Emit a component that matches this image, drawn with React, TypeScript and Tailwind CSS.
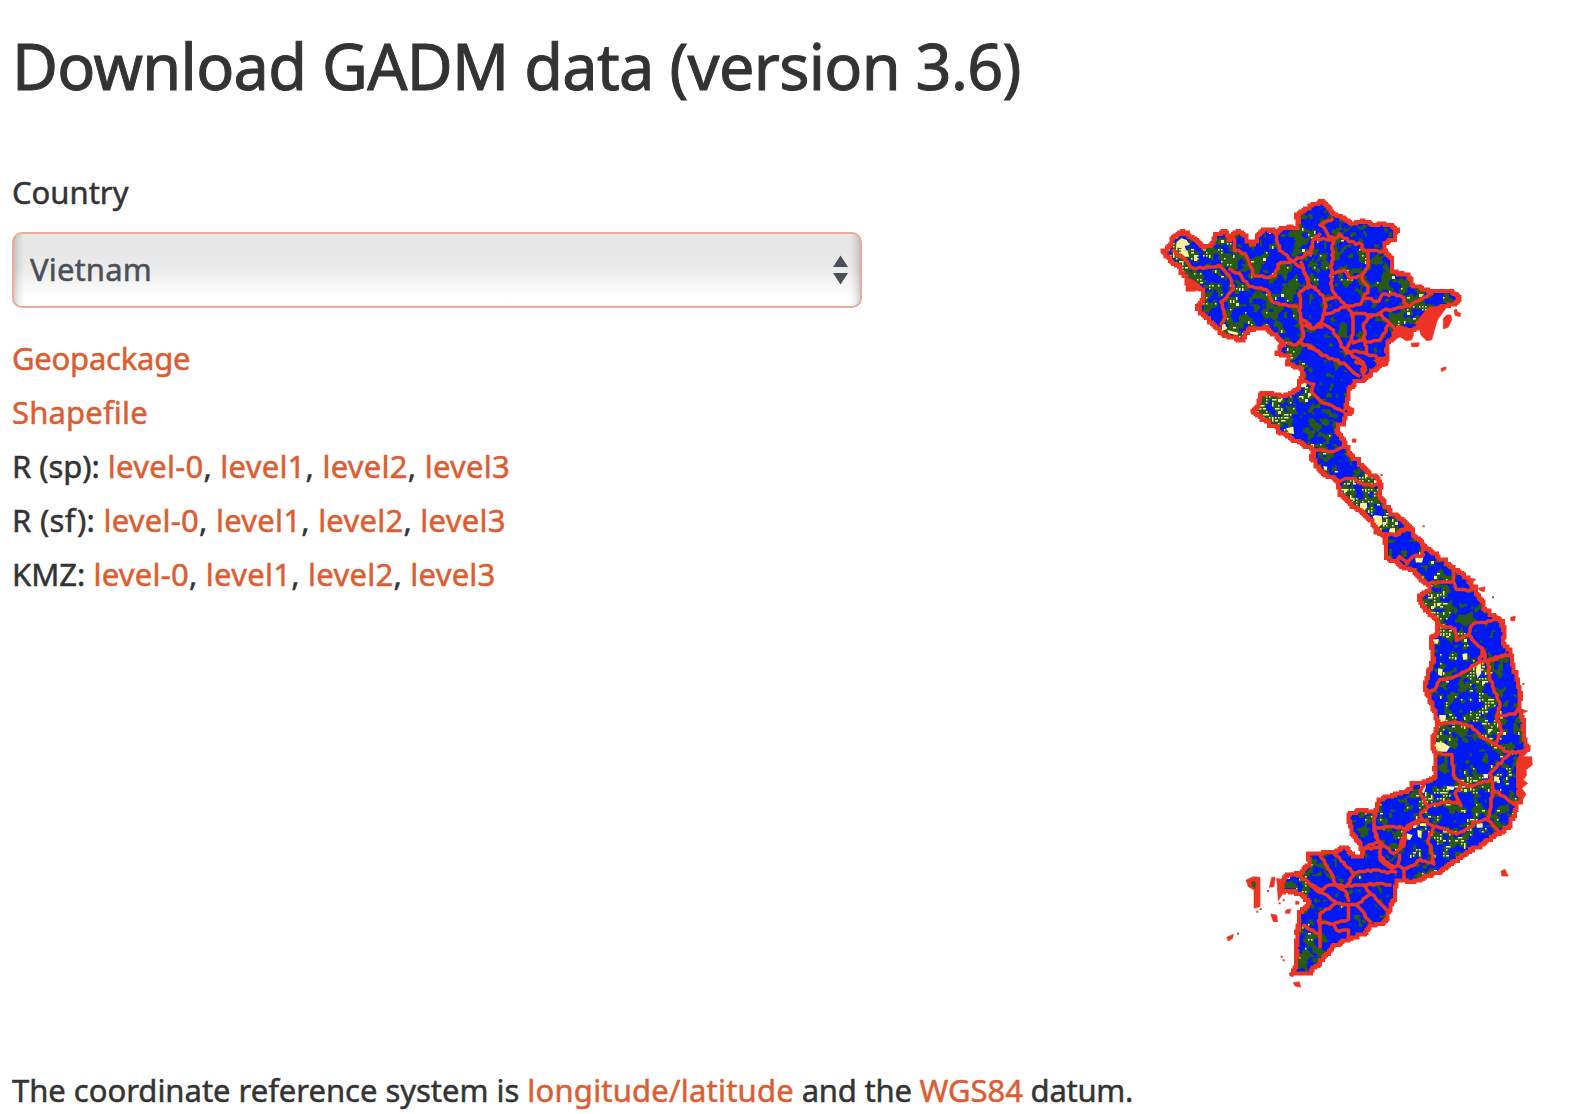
import React from "react";

type Pt = [number, number];

/* Map sheets: origin of each tile; tile coordinates run at three units per pixel. */
const TILES: Record<string, Pt> = {
  A: [1150, 190],
  B: [1300, 190],
  C: [1230, 360],
  D: [1370, 500],
  E: [1400, 650],
  F: [1330, 760],
  G: [1210, 830],
};

const toPoints = (tile: string, text: string): Pt[] =>
  text
    .trim()
    .split(/\s+/)
    .map((pair) => {
      const [x, y] = pair.split(",").map(Number);
      return [TILES[tile][0] + x / 3, TILES[tile][1] + y / 3] as Pt;
    });

const hash = (x: number, y: number, seed: number) => {
  let h = (x * 374761393 + y * 668265263 + seed * 2147483647) | 0;
  h = Math.imul(h ^ (h >>> 13), 1274126177);
  h = Math.imul(h ^ (h >>> 16), 2246822519);
  return ((h ^ (h >>> 15)) >>> 0) / 4294967296;
};

const noise = (x: number, y: number, size: number, seed: number) => {
  const gx = x / size;
  const gy = y / size;
  const ix = Math.floor(gx);
  const iy = Math.floor(gy);
  const fx = gx - ix;
  const fy = gy - iy;
  const top = hash(ix, iy, seed) * (1 - fx) + hash(ix + 1, iy, seed) * fx;
  const bottom = hash(ix, iy + 1, seed) * (1 - fx) + hash(ix + 1, iy + 1, seed) * fx;
  return top * (1 - fy) + bottom * fy;
};

/* Turns straight edges into short snapped steps so lines look rasterised. */
const roughen = (pts: Pt[], closed: boolean, seed: number): Pt[] => {
  const out: Pt[] = [];
  const snap = (v: number) => Math.round(v / 1.5) * 1.5;
  const count = closed ? pts.length : pts.length - 1;
  const push = (x: number, y: number) => {
    const last = out[out.length - 1];
    if (closed && last && last[0] !== x && last[1] !== y) {
      out.push((out.length + seed) % 2 ? [x, last[1]] : [last[0], y]);
    }
    out.push([x, y]);
  };
  for (let i = 0; i < count; i++) {
    const a = pts[i];
    const b = pts[(i + 1) % pts.length];
    const steps = Math.max(1, Math.round(Math.hypot(b[0] - a[0], b[1] - a[1]) / (closed ? 2.2 : 3)));
    for (let s = 0; s < steps; s++) {
      const t = s / steps;
      const j = s === 0 ? 0 : 1.6;
      push(
        snap(a[0] + (b[0] - a[0]) * t + (hash(i, s, seed) - 0.5) * j),
        snap(a[1] + (b[1] - a[1]) * t + (hash(i, s, seed + 9) - 0.5) * j)
      );
    }
  }
  if (!closed) out.push(pts[pts.length - 1]);
  return out;
};

const toPath = (pts: Pt[], closed: boolean) =>
  "M" + pts.map((p) => `${p[0].toFixed(1)} ${p[1].toFixed(1)}`).join("L") + (closed ? "Z" : "");

const OUTLINE: Pt[] = [
  ...toPoints("A", "37,185 60,165 75,135 95,125 120,138 140,155 165,172 187,160 205,130 225,122 240,150 250,130 268,122 290,150 310,165 325,135 345,117 372,120 385,127 410,112 435,112 447,95 440,75 465,62"),
  ...toPoints("B", "30,48 68,34 88,50 100,74 130,82 155,100 190,90 215,108 250,102 292,117 280,150 255,160 248,180 272,200 278,245 323,255 340,285 395,307 450,305 480,323 465,343 425,350 400,390 370,405 340,420 290,425 262,465 260,520 225,535 195,565"),
  ...toPoints("C", "375,65 355,100 348,145 365,155 345,162 340,185 320,210 340,240 348,262 375,295 410,330 440,355 455,375 447,400 475,450 530,495"),
  ...toPoints("D", "128,95 160,137 220,180 260,210 297,240 320,275 345,325 365,347 390,357 400,380 403,430 422,460 430,500"),
  ...toPoints("E", "350,90 362,135 358,175 370,215 373,260 386,295 365,320 355,350 355,400 362,450 345,485 323,535 280,560 240,590 200,605"),
  ...toPoints("F", "375,305 330,335 290,350 245,366 205,360 195,380 197,415"),
  ...toPoints("G", "557,205 540,235 523,278 490,285 463,312 410,330 370,350 345,375 325,405 295,430 247,432 260,400 260,330 267,247 300,220 270,193 235,183 214,185 217,150 235,132 265,130 300,102 294,72 320,72 370,67 405,52 430,78 458,78 450,45 425,12"),
  ...toPoints("F", "65,215 60,190 54,170 88,148 137,157 146,117 200,102 232,92 250,70 290,63"),
  ...toPoints("E", "105,380 108,320 96,290 102,255 113,225 105,185 90,150 74,110 86,68 99,40"),
  ...toPoints("D", "188,455 182,417 205,400 202,360 165,330 147,288 180,270 175,250 150,240 130,210 95,200 75,185 48,175 46,115 20,97"),
  ...toPoints("C", "438,500 395,460 330,400 320,360 270,333 247,295 248,265 190,240 130,200 90,170 62,157 87,140 89,103 120,100 160,110 206,85 206,62 220,50 218,30 172,10"),
  ...toPoints("A", "412,520 415,500 378,490 400,465 385,445 345,412 300,417 275,450 220,433 195,412 157,370 143,355 157,325 157,297 117,293 108,260 80,225"),
];

const BORDERS: [string, string][] = [
  ["A", "65,180 100,205 130,235 215,230 245,270 250,300 215,335 227,380 210,405"],
  ["A", "250,140 255,180 285,190 305,230 310,260"],
  ["A", "235,235 265,250 300,290 350,300 365,335 400,345 445,350"],
  ["A", "310,260 375,260 385,220 430,215 460,235 480,290 450,305 450,380 490,415 520,410"],
  ["A", "375,125 390,180 430,215 460,200 485,180 490,145 512,130"],
  ["A", "450,380 460,440 440,465 410,460"],
  ["A", "455,460 490,472 520,500"],
  ["B", "30,200 40,145 100,150 60,105 100,85"],
  ["B", "0,215 30,285 10,300"],
  ["B", "30,285 55,305 75,328 110,320 140,350 180,345 190,325"],
  ["B", "100,150 95,240 95,300 110,320"],
  ["B", "100,150 120,130 145,155 185,165 190,180 250,185"],
  ["B", "205,185 205,230 185,255 205,300 190,320 235,335 250,312 300,315 325,350"],
  ["B", "95,250 130,240 150,265 185,258"],
  ["B", "75,328 75,365 60,400 100,420 130,475 190,520 187,550"],
  ["B", "75,375 140,350 155,365 160,400 155,450 140,480"],
  ["B", "160,370 220,375 250,362 325,350 350,335 400,310"],
  ["B", "220,375 190,400 195,450 155,460"],
  ["B", "240,370 270,400 240,450 195,455 200,490 260,512"],
  ["B", "270,400 290,425"],
  ["B", "200,490 170,485 135,490"],
  ["B", "0,405 40,415 60,400"],
  ["B", "0,455 60,490 130,520 180,560"],
  ["C", "375,5 405,20 400,50"],
  ["C", "206,62 250,70 242,95 275,125 345,155"],
  ["C", "248,268 300,275 345,262"],
  ["C", "320,362 375,355 400,375 455,375"],
  ["C", "438,500 455,525 500,525 535,500"],
  ["D", "20,100 75,105 95,90 125,90"],
  ["D", "75,185 90,170 110,190 130,170 160,165 155,140"],
  ["D", "180,250 250,245 260,270 320,270"],
  ["D", "250,215 250,245"],
  ["D", "205,375 255,385 260,420 295,405 310,370 390,357"],
  ["D", "295,405 345,460 345,485 400,465 425,465"],
  ["E", "240,35 180,75 120,90 100,122 80,125"],
  ["E", "245,0 240,35 265,35 320,10"],
  ["E", "265,35 270,90 300,160 290,200 345,190 360,170"],
  ["E", "290,200 305,240 285,280 250,265 215,230 165,215 113,225"],
  ["E", "250,265 330,310 390,300"],
  ["E", "330,310 270,370 280,420 350,465"],
  ["E", "110,310 155,315 165,385 200,410 270,390"],
  ["E", "185,405 165,430 185,465 145,455 85,470 60,490 65,505 100,530 170,550 215,530 220,515 265,510 300,550"],
  ["E", "75,390 60,430 85,470"],
  ["E", "280,420 265,510"],
  ["E", "65,505 20,530 0,590"],
  ["E", "100,530 85,570 100,625"],
  ["F", "137,157 130,205 145,245 190,280 220,260 225,210 270,185"],
  ["F", "130,200 210,200 225,210"],
  ["F", "145,245 105,262 95,290"],
  ["F", "150,260 150,290 180,315 230,325 270,300 310,310 310,290"],
  ["F", "210,280 205,320"],
  ["F", "220,325 225,360"],
  ["G", "330,75 360,125 375,160 330,180 270,140 240,130"],
  ["G", "370,67 430,130 500,120 560,130"],
  ["G", "430,130 410,170 375,165 410,190 415,215"],
  ["G", "300,165 380,220 330,250 330,355"],
  ["G", "490,0 510,50 460,60"],
  ["G", "510,50 510,90 550,120"],
  ["G", "410,170 500,160 545,165"],
  ["G", "460,165 530,240"],
  ["G", "485,190 440,225 485,280"],
  ["G", "380,220 440,225"],
  ["G", "415,225 415,270 370,280 330,280"],
  ["G", "370,280 380,300 415,300 415,325"],
  ["G", "275,285 325,310"],
];

const ISLANDS: [string, string][] = [
  ["G", "108,150 130,140 150,142 150,230 132,235 132,180 115,170"],
  ["G", "185,142 195,142 192,170 178,172"],
  ["G", "200,145 220,150 216,195 205,212"],
  ["G", "182,252 200,255 203,275 190,275"],
  ["G", "228,240 242,237 240,250 226,250"],
  ["G", "257,213 268,215 266,223 257,223"],
  ["G", "50,322 70,313 68,325 55,333"],
  ["G", "250,458 268,455 272,472 255,468"],
  ["G", "237,430 250,422 250,440 240,438"],
  ["A", "108,262 130,270 150,285 155,298 132,304 108,304"],
  ["B", "430,385 440,375 453,375 455,390 445,412 430,417"],
  ["B", "462,360 470,358 472,366 482,370 480,380 465,376"],
  ["B", "333,460 358,458 355,470 335,470"],
  ["B", "423,535 438,530 438,538 425,545"],
  ["B", "385,352 445,345 428,368 412,390 402,425 395,450 380,452 362,435 358,412 345,400"],
  ["B", "290,405 320,412 342,430 335,450 318,452 300,440 275,455"],
  ["C", "367,237 378,237 378,247 367,247"],
  ["C", "360,142 372,145 370,162 360,160"],
  ["C", "430,0 478,0 472,18 450,20"],
  ["D", "422,352 436,348 434,363 422,362"],
  ["D", "325,265 345,260 343,275 330,272"],
  ["D", "285,232 318,238 300,252"],
  ["E", "355,320 395,320 397,345 378,360 380,375 370,390 383,400 365,415 378,432 362,460 350,400 350,345"],
  ["E", "365,178 383,183 365,192"],
  ["F", "513,333 525,328 535,348 515,348"],
];

const DOTS: [string, string][] = [
  ["G", "174,183 152,237 142,245 215,380 221,391 209,220 221,211 84,311"],
  ["C", "455,345"],
  ["D", "161,79 369,292"],
  ["E", "370,102"],
];

/* x, y, radius, share of green, share of yellow */
const COVER: [number, number, number, number, number][] = [
  [1183, 245, 14, 0.75, 0.5],
  [1215, 245, 22, 0.5, 0.14],
  [1210, 300, 22, 0.42, 0.14],
  [1240, 300, 25, 0.42, 0.12],
  [1262, 270, 20, 0.35, 0.08],
  [1285, 310, 16, 0.45, 0.06],
  [1300, 245, 24, 0.3, 0.07],
  [1320, 240, 14, 0.35, 0.15],
  [1340, 265, 20, 0.35, 0.08],
  [1365, 225, 20, 0.08, 0.02],
  [1385, 270, 20, 0.35, 0.04],
  [1410, 300, 16, 0.45, 0.14],
  [1315, 300, 15, 0.05, 0],
  [1350, 320, 28, -0.1, 0],
  [1335, 345, 20, 0.05, 0],
  [1340, 385, 20, -0.05, 0],
  [1290, 350, 12, 0.45, 0.1],
  [1270, 405, 16, 0.85, 0.35],
  [1298, 393, 9, 0.6, 0.3],
  [1315, 420, 14, 0.2, 0.01],
  [1318, 460, 12, 0.5, 0.14],
  [1345, 460, 14, 0.35, 0.05],
  [1360, 495, 14, 0.6, 0.35],
  [1385, 522, 12, 0.5, 0.35],
  [1405, 545, 12, 0, 0.02],
  [1430, 565, 12, 0.2, 0.1],
  [1435, 605, 12, 0.75, 0.35],
  [1465, 605, 14, 0.15, 0.02],
  [1487, 635, 12, -0.05, 0],
  [1445, 640, 12, 0.5, 0.3],
  [1455, 655, 16, 0.3, 0.25],
  [1480, 670, 8, 0.6, 0.6],
  [1502, 680, 12, 0.15, 0.02],
  [1450, 690, 18, 0.22, 0.1],
  [1485, 710, 10, 0.5, 0.4],
  [1445, 731, 12, 0.75, 0.22],
  [1490, 730, 9, 0.7, 0.4],
  [1465, 755, 18, 0.15, 0],
  [1515, 725, 12, 0.25, 0.08],
  [1470, 780, 10, 0.65, 0.35],
  [1500, 775, 10, 0.4, 0.35],
  [1430, 795, 14, 0.4, 0.35],
  [1475, 803, 12, 0.12, 0.1],
  [1510, 805, 12, 0.25, 0.08],
  [1465, 825, 12, 0.5, 0.25],
  [1400, 805, 14, 0.25, 0.04],
  [1362, 818, 12, 0.3, 0.14],
  [1417, 835, 12, 0.3, 0.35],
  [1445, 845, 12, 0.45, 0.25],
  [1400, 873, 6, 0.8, 0.35],
  [1300, 885, 8, 0.8, 0.4],
  [1290, 880, 8, 0.4, 0.1],
  [1340, 870, 25, 0, 0.05],
  [1380, 890, 25, -0.05, 0.01],
  [1308, 935, 12, 0.4, 0.14],
  [1318, 953, 8, 0.5, 0.02],
  [1345, 930, 20, 0, 0.04],
];

const PATCHES: [string, string][] = [
  ["A", "80,155 95,145 110,150 118,165 104,168 108,180 92,185 95,175 78,172"],
  ["A", "90,185 112,180 118,200 102,200"],
  ["A", "215,402 226,402 230,418 216,422"],
  ["A", "232,420 265,428 262,436 236,430"],
  ["C", "208,62 230,60 228,82 208,82"],
  ["C", "433,465 455,468 455,492 445,503 433,490"],
  ["C", "390,430 410,428 412,442 400,455 390,448"],
  ["C", "168,205 190,200 192,222 178,220"],
  ["C", "478,508 495,512 492,522 478,520"],
  ["C", "280,318 292,320 290,332 282,328"],
  ["D", "8,48 35,48 38,72 22,82 12,66"],
  ["D", "60,85 75,85 75,100 62,98"],
  ["D", "135,173 160,172 156,188 138,186"],
  ["D", "277,462 292,460 292,478 280,480"],
  ["D", "188,418 205,418 203,432 192,430"],
  ["D", "322,490 332,490 334,520 322,535 318,515"],
  ["E", "102,275 130,278 150,290 140,305 102,305"],
  ["E", "118,195 138,195 136,218 118,215"],
  ["E", "60,395 72,392 78,410 72,430 62,425"],
  ["E", "115,55 128,58 125,78 114,74"],
  ["E", "230,520 248,520 248,533 230,533"],
  ["E", "250,372 264,372 264,385 252,385"],
  ["E", "140,408 165,410 160,420 142,418"],
  ["E", "283,378 298,382 296,395 284,393"],
  ["E", "60,520 78,520 78,528 60,528"],
  ["F", "262,210 275,212 274,235 264,230"],
  ["F", "230,220 248,225 240,240 230,238"],
];

const CELL = 1.5;

function buildTexture() {
  let green = "";
  let yellow = "";
  for (let y = 195; y < 990; y += CELL) {
    const cy = y + CELL / 2;
    const xs: number[] = [];
    OUTLINE.forEach((a, i) => {
      const b = OUTLINE[(i + 1) % OUTLINE.length];
      if (a[1] > cy !== b[1] > cy) xs.push(a[0] + ((cy - a[1]) / (b[1] - a[1])) * (b[0] - a[0]));
    });
    xs.sort((p, q) => p - q);
    for (let k = 0; k + 1 < xs.length; k += 2) {
      let runStart = -1;
      const first = Math.floor(xs[k] / CELL) * CELL;
      for (let x = first; x <= xs[k + 1] + CELL; x += CELL) {
        let weight = 0.02;
        let g = 0.006;
        let w = 0.001;
        for (const c of COVER) {
          const d = ((x - c[0]) ** 2 + (y - c[1]) ** 2) / (c[2] * c[2]);
          if (d > 9) continue;
          const f = Math.exp(-d * 1.6);
          weight += f;
          g += f * c[3];
          w += f * c[4];
        }
        g /= weight;
        w /= weight;
        const n = noise(x, y, 5, 3) * 0.72 + noise(x, y, 2.4, 8) * 0.28;
        const isGreen = n < 0.3 + g * 0.4;
        if (isGreen && runStart < 0) runStart = x;
        if ((!isGreen || x + CELL > xs[k + 1] + CELL) && runStart >= 0) {
          green += `M${runStart} ${y}H${x}V${y + CELL}H${runStart}Z`;
          runStart = -1;
        }
        const col = Math.round(x / CELL);
        const row = Math.round(y / CELL);
        if (col % 2 === 0 && row % 2 === 0 && isGreen && hash(col, row, 21) < w * 1.7) {
          const wide = hash(col, row, 33) < 0.25 ? CELL * 2 : CELL;
          const tall = hash(col, row, 35) < 0.25 ? CELL * 2 : CELL;
          yellow += `M${x} ${y}h${wide}v${tall}h${-wide}Z`;
        }
      }
    }
  }
  return { green, yellow };
}

const TEXTURE = buildTexture();
const OUTLINE_PATH = toPath(roughen(OUTLINE, true, 5), true);
const BORDER_PATH = BORDERS.map(([t, p], i) => toPath(roughen(toPoints(t, p), false, i + 40), false)).join("");
const ISLAND_PATH = ISLANDS.map(([t, p]) => toPath(toPoints(t, p), true)).join("");
const PATCH_PATH = PATCHES.map(([t, p]) => toPath(toPoints(t, p), true)).join("");
const DOT_PATH = DOTS.map(([t, p]) =>
  toPoints(t, p)
    .map(([x, y]) => `M${x - 1} ${y - 1}h2v2h-2Z`)
    .join("")
).join("");

function VietnamMap() {
  return (
    <svg viewBox="1155 190 385 805" className="h-[805px] w-[385px]" role="img" aria-label="Map of Vietnam">
      <defs>
        <clipPath id="land">
          <path d={OUTLINE_PATH} />
        </clipPath>
      </defs>
      <g clipPath="url(#land)">
        <path d={OUTLINE_PATH} fill="#0019f5" />
        <path d={TEXTURE.green} fill="#2a5d14" stroke="#2a5d14" strokeWidth="0.3" />
        <path d={PATCH_PATH} fill="#fdf3a0" />
        <path d={TEXTURE.yellow} fill="#f3ee96" />
      </g>
      <path d={BORDER_PATH} fill="none" stroke="#ed3324" strokeWidth="3.6" strokeLinejoin="round" />
      <path d={OUTLINE_PATH} fill="none" stroke="#ed3324" strokeWidth="4" />
      <path d={ISLAND_PATH} fill="#ed3324" stroke="#ed3324" strokeWidth="0.6" />
      <path d={DOT_PATH} fill="#ed3324" />
      <path d="M1251.500 881.500h4v7h-2v-2h-2z" fill="#2a5d14" />
    </svg>
  );
}

function Link({ children, className = "" }: { children: React.ReactNode; className?: string }) {
  return (
    <a href="#" className={"text-[#dc5d31] " + className}>
      {children}
    </a>
  );
}

function Levels({ label, labelClass }: { label: string; labelClass: string }) {
  return (
    <p>
      <span className={labelClass}>{label} </span>
      <span className="tracking-[0.25px]">
        <Link>level-0</Link>, <Link>level1</Link>, <Link>level2</Link>, <Link>level3</Link>
      </span>
    </p>
  );
}

export default function App() {
  return (
    <main className="flex h-[1114px] w-[1590px] flex-col overflow-hidden bg-white pl-3 font-['Noto_Sans',sans-serif] text-[31px] leading-[54px] text-[#333333] [-webkit-text-stroke-width:0.5px]">
      <h1 className="mt-[26px] text-[63px] leading-[80px] tracking-[-0.68px] whitespace-nowrap [-webkit-text-stroke-width:1px]">
        Download GADM data (version 3.6)
      </h1>
      <div className="flex h-[960px] items-start justify-between">
        <section className="w-[850px] pt-[59px]">
          <label className="block">Country</label>
          <div className="mt-[13px] flex h-[76px] items-center justify-between rounded-[10px] border-2 border-[#ecab93] bg-[linear-gradient(to_right,rgba(0,0,0,0.17),rgba(0,0,0,0.08)_4px,transparent_10px,transparent_calc(100%-10px),rgba(0,0,0,0.08)_calc(100%-4px),rgba(0,0,0,0.17)),linear-gradient(to_bottom,#e6e6e6,#e8e8e8_28%,#ebebeb_50%,#f4f4f4_66%,#fdfdfd_85%,#ffffff)] pr-[12px] pb-[2px] pl-[16px] tracking-[0.15px] text-[#495057]">
            <span>Vietnam</span>
            <svg viewBox="0 0 15 30" className="mt-[2px] h-[30px] w-[15px]" fill="#4a5058">
              <path d="M7.500 0.500L15 12H0ZM0 18H15L7.500 29.500Z" />
            </svg>
          </div>
          <div className="mt-[23px] whitespace-nowrap">
            <p><Link className="tracking-[-0.23px]">Geopackage</Link></p>
            <p><Link className="tracking-[0.17px]">Shapefile</Link></p>
            <Levels label="R (sp):" labelClass="tracking-[-0.05px]" />
            <Levels label="R (sf):" labelClass="tracking-[0.3px]" />
            <Levels label="KMZ:" labelClass="" />
          </div>
        </section>
        <div className="mt-[84px] mr-[50px]">
          <VietnamMap />
        </div>
      </div>
      <footer className="leading-[48px] whitespace-nowrap">
        <span className="tracking-[-0.02px]">The coordinate reference system is </span>
        <Link className="tracking-[0.2px]">longitude/latitude</Link>
        <span className="tracking-[-0.22px]"> and the </span>
        <Link className="tracking-[-0.05px]">WGS84</Link>
        <span className="tracking-[-0.27px]"> datum.</span>
      </footer>
    </main>
  );
}
